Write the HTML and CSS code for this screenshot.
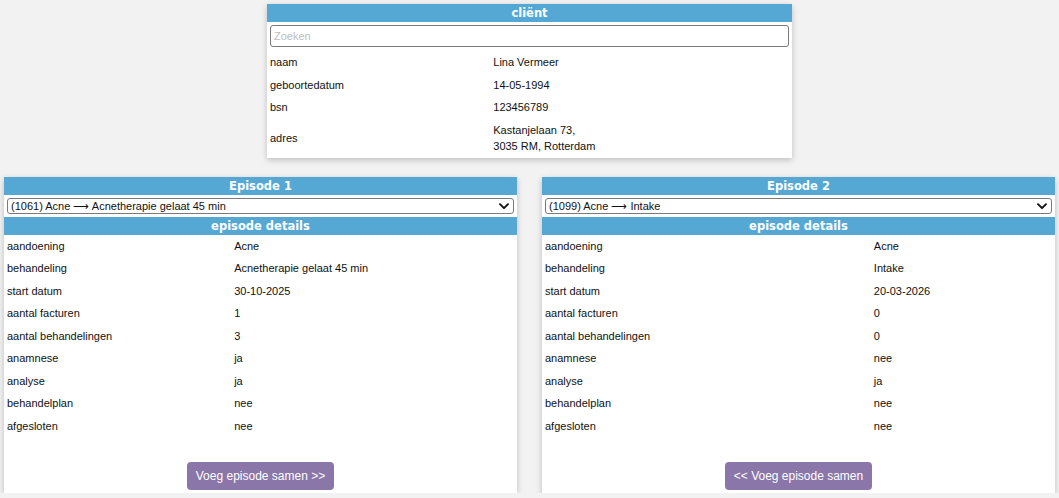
FILE: index.html
```html
<!DOCTYPE html>
<html lang="nl">
<head>
<meta charset="utf-8">
<title>Episodes samenvoegen</title>
<link rel="stylesheet" href="styles.css">
</head>
<body>
<div class="page">
  <section class="card client">
    <div class="card-head">cliënt</div>
    <div class="search-wrap"><input class="search" type="text" placeholder="Zoeken"></div>
    <table class="info">
      <tr><td>naam</td><td>Lina Vermeer</td></tr>
      <tr><td>geboortedatum</td><td>14-05-1994</td></tr>
      <tr><td>bsn</td><td>123456789</td></tr>
      <tr><td>adres</td><td>Kastanjelaan 73,<br>3035 RM, Rotterdam</td></tr>
    </table>
  </section>

  <div class="episodes">
    <section class="card episode">
      <div class="card-head">Episode 1</div>
      <div class="select-wrap">
        <select class="ep-select"><option>(1061) Acne ⟶ Acnetherapie gelaat 45 min</option></select>
        <svg class="chev" width="10" height="7" viewBox="0 0 10 7"><path d="M1 1.2 L5 5.2 L9 1.2" fill="none" stroke="#111" stroke-width="1.9" stroke-linecap="round" stroke-linejoin="round"/></svg>
      </div>
      <div class="card-head">episode details</div>
      <table class="info">
        <tr><td>aandoening</td><td>Acne</td></tr>
        <tr><td>behandeling</td><td>Acnetherapie gelaat 45 min</td></tr>
        <tr><td>start datum</td><td>30-10-2025</td></tr>
        <tr><td>aantal facturen</td><td>1</td></tr>
        <tr><td>aantal behandelingen</td><td>3</td></tr>
        <tr><td>anamnese</td><td>ja</td></tr>
        <tr><td>analyse</td><td>ja</td></tr>
        <tr><td>behandelplan</td><td>nee</td></tr>
        <tr><td>afgesloten</td><td>nee</td></tr>
      </table>
      <div class="actions"><button class="merge">Voeg episode samen &gt;&gt;</button></div>
    </section>

    <section class="card episode">
      <div class="card-head">Episode 2</div>
      <div class="select-wrap">
        <select class="ep-select"><option>(1099) Acne ⟶ Intake</option></select>
        <svg class="chev" width="10" height="7" viewBox="0 0 10 7"><path d="M1 1.2 L5 5.2 L9 1.2" fill="none" stroke="#111" stroke-width="1.9" stroke-linecap="round" stroke-linejoin="round"/></svg>
      </div>
      <div class="card-head">episode details</div>
      <table class="info">
        <tr><td>aandoening</td><td>Acne</td></tr>
        <tr><td>behandeling</td><td>Intake</td></tr>
        <tr><td>start datum</td><td>20-03-2026</td></tr>
        <tr><td>aantal facturen</td><td>0</td></tr>
        <tr><td>aantal behandelingen</td><td>0</td></tr>
        <tr><td>anamnese</td><td>nee</td></tr>
        <tr><td>analyse</td><td>ja</td></tr>
        <tr><td>behandelplan</td><td>nee</td></tr>
        <tr><td>afgesloten</td><td>nee</td></tr>
      </table>
      <div class="actions"><button class="merge">&lt;&lt; Voeg episode samen</button></div>
    </section>
  </div>
</div>
</body>
</html>
```

FILE: styles.css
```css
* { box-sizing: border-box; }
html, body {
  margin: 0;
  padding: 0;
  background: #f2f2f2;
  font-family: "Liberation Sans", Arial, sans-serif;
  font-size: 11px;
  color: #111;
}
.page {
  padding: 4px 4px 0 4px;
}
.card {
  background: #fff;
  box-shadow: 0 2px 6px rgba(0, 0, 0, 0.22);
}
.client {
  width: 525px;
  margin: 0 auto;
}
.card-head {
  background: #56a8d4;
  color: #fff;
  font-family: "DejaVu Sans", Verdana, sans-serif;
  font-weight: bold;
  font-size: 11.5px;
  height: 18px;
  line-height: 18px;
  text-align: center;
}
.search-wrap {
  padding: 3px 3px 4px 3px;
}
.search {
  display: block;
  width: 100%;
  height: 22px;
  border: 1px solid #7a7a7a;
  border-radius: 3px;
  padding: 0 3px;
  font-family: "Liberation Sans", Arial, sans-serif;
  font-size: 11px;
  outline: none;
}
.search::placeholder { color: #bdbdbd; }
.info {
  width: 100%;
  border-collapse: collapse;
}
.info td {
  padding: 3px 3px;
  line-height: 16.5px;
  vertical-align: middle;
  white-space: nowrap;
}
.episodes {
  display: grid;
  grid-template-columns: 1fr 1fr;
  gap: 25px;
  margin-top: 19px;
}
.episode {
  display: flex;
  flex-direction: column;
}
.select-wrap {
  position: relative;
  padding: 3px;
}
.ep-select {
  display: block;
  width: 100%;
  height: 16px;
  appearance: none;
  -webkit-appearance: none;
  background: #fff;
  border: 1px solid #7a7a7a;
  border-radius: 3px;
  padding: 0 3px;
  font-family: "Liberation Sans", Arial, sans-serif;
  font-size: 11px;
  line-height: 14px;
  color: #111;
}
.chev {
  position: absolute;
  right: 8px;
  top: 8px;
}
.actions {
  display: flex;
  justify-content: center;
  padding: 25px 0 3px 0;
}
.merge {
  background: #8a76a8;
  color: #fff;
  border: none;
  border-radius: 4px;
  height: 28px;
  padding: 0 9px;
  font-family: "Liberation Sans", Arial, sans-serif;
  font-size: 12px;
}
```
